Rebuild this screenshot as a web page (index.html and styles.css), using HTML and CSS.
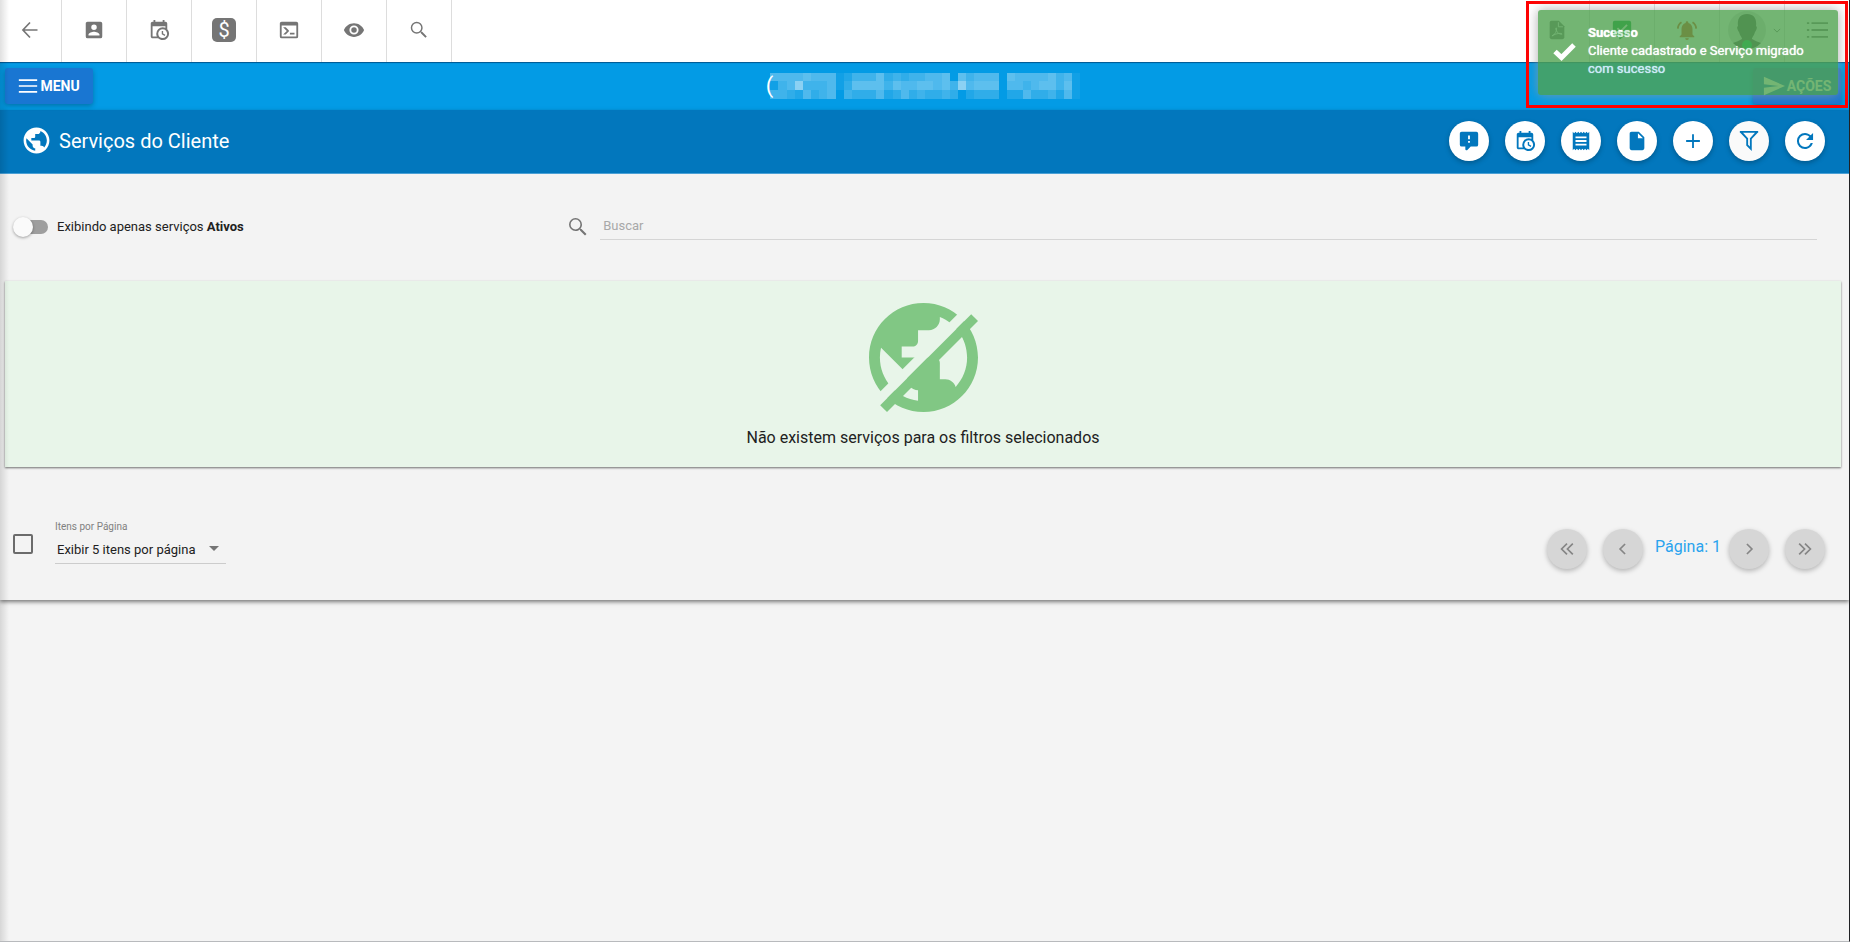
FILE: index.html
```html
<!DOCTYPE html>
<html lang="pt-BR">
<head>
<meta charset="utf-8">
<title>Serviços do Cliente</title>
<link rel="stylesheet" href="styles.css">
</head>
<body>
<svg class="defs" aria-hidden="true">
  <symbol id="calendar" viewBox="0 0 24 24"><path d="M15,13H16.5V15.82L18.94,17.23L18.19,18.53L15,16.69V13M19,8H5V19H9.67C9.24,18.09 9,17.07 9,16A7,7 0 0,1 16,9C17.07,9 18.09,9.24 19,9.67V8M5,21C3.89,21 3,20.1 3,19V5C3,3.89 3.89,3 5,3H6V1H8V3H16V1H18V3H19A2,2 0 0,1 21,5V11.1C22.24,12.36 23,14.09 23,16A7,7 0 0,1 16,23C14.09,23 12.36,22.24 11.1,21H5M16,11.15A4.85,4.85 0 0,0 11.15,16C11.15,18.68 13.32,20.85 16,20.85A4.85,4.85 0 0,0 20.85,16C20.85,13.32 18.68,11.15 16,11.15Z"/></symbol>
  <symbol id="magnify" viewBox="0 0 24 24"><path d="M9.5,3A6.5,6.5 0 0,1 16,9.5C16,11.11 15.41,12.59 14.44,13.73L14.71,14H15.5L20.5,19L19,20.5L14,15.5V14.71L13.73,14.44C12.59,15.41 11.11,16 9.5,16A6.5,6.5 0 0,1 3,9.5A6.5,6.5 0 0,1 9.5,3M9.5,4.6A4.9,4.9 0 0,0 4.6,9.5A4.9,4.9 0 0,0 9.5,14.4A4.9,4.9 0 0,0 14.4,9.5A4.9,4.9 0 0,0 9.5,4.6Z"/></symbol>
  <symbol id="globe" viewBox="0 0 24 24"><path d="M12 2C6.48 2 2 6.48 2 12s4.480 10 10 10 10-4.480 10-10S17.520 2 12 2zm-1 17.930c-3.950-.490-7-3.850-7-7.930 0-.620.080-1.210.210-1.790L9 15v1c0 1.100.900 2 2 2v1.930zm6.900-2.540c-.260-.810-1-1.390-1.900-1.390h-1v-3c0-.550-.450-1-1-1H8v-2h2c.550 0 1-.450 1-1V7h2c1.100 0 2-.900 2-2v-.410c2.930 1.190 5 4.060 5 7.410 0 2.080-.800 3.970-2.100 5.390z"/></symbol>
</svg>

<header class="topbar">
  <nav class="tools">
    <button class="tool back" aria-label="Voltar"><svg class="icon" viewBox="0 0 24 24"><path class="line" d="M21 12H4M12 3L3.500 12L12 21"/></svg></button>
    <button class="tool" aria-label="Clientes"><svg class="icon" viewBox="0 0 24 24"><path d="M6,17C6,15 10,13.900 12,13.900C14,13.900 18,15 18,17V18H6M15,9A3,3 0 0,1 12,12A3,3 0 0,1 9,9A3,3 0 0,1 12,6A3,3 0 0,1 15,9M3,5V19A2,2 0 0,0 5,21H19A2,2 0 0,0 21,19V5A2,2 0 0,0 19,3H5C3.890,3 3,3.900 3,5Z"/></svg></button>
    <button class="tool" aria-label="Agenda"><svg class="icon"><use href="#calendar"/></svg></button>
    <button class="tool" aria-label="Financeiro"><span class="money">$</span></button>
    <button class="tool" aria-label="Console"><svg class="icon" viewBox="0 0 24 24"><path d="M20,19V7H4V19H20M20,3A2,2 0 0,1 22,5V19A2,2 0 0,1 20,21H4A2,2 0 0,1 2,19V5C2,3.890 2.900,3 4,3H20M13,17V15H18V17H13M9.580,13L5.570,9H8.400L11.700,12.300C12.090,12.690 12.090,13.330 11.700,13.720L8.420,17H5.590L9.580,13Z"/></svg></button>
    <button class="tool" aria-label="Visualizar"><svg class="icon" viewBox="0 0 24 24"><path d="M12,9A3,3 0 0,0 9,12A3,3 0 0,0 12,15A3,3 0 0,0 15,12A3,3 0 0,0 12,9M12,17A5,5 0 0,1 7,12A5,5 0 0,1 12,7A5,5 0 0,1 17,12A5,5 0 0,1 12,17M12,4.500C7,4.500 2.730,7.610 1,12C2.730,16.390 7,19.500 12,19.500C17,19.500 21.270,16.390 23,12C21.270,7.610 17,4.500 12,4.500Z"/></svg></button>
    <button class="tool" aria-label="Pesquisar"><svg class="icon"><use href="#magnify"/></svg></button>
  </nav>
  <nav class="tools tools-right">
    <button class="tool" aria-label="PDF"><svg class="icon" viewBox="0 0 24 24"><path d="M6 2H14L20 8V20A2 2 0 0 1 18 22H6A2 2 0 0 1 4 20V4A2 2 0 0 1 6 2Z"/><path class="cut" d="M13.500 3.500V8.500H18.500M6.500 18.500C10 17 12 13 11.500 10C11 9 10.300 10 11 12C12 15 15 17 17.500 16.500C17 15 11 15.500 6.500 18.500"/></svg></button>
    <button class="tool green" aria-label="Tarefas"><svg class="icon" viewBox="0 0 24 24"><path d="M4 2H20A2 2 0 0 1 22 4V17A2 2 0 0 1 20 19H14L10 22H9V19H4A2 2 0 0 1 2 17V4A2 2 0 0 1 4 2Z"/><path class="cut check" d="M7 10L10.500 13.500L17.500 6.500"/></svg></button>
    <button class="tool orange" aria-label="Notificações"><svg class="icon" viewBox="0 0 24 24"><path d="M12 2.500A1.500 1.500 0 0 1 13.500 4V4.300C16.400 5 18 7.600 18 11V17L20 19V20H4V19L6 17V11C6 7.600 7.600 5 10.500 4.300V4A1.500 1.500 0 0 1 12 2.500M10 21H14A2 2 0 0 1 10 21"/><path class="line" d="M6 3.500C3.500 5 2.200 7.500 2 10.500M18 3.500C20.500 5 21.800 7.500 22 10.500"/></svg></button>
    <button class="tool user" aria-label="Usuário"><svg class="avatar" viewBox="0 0 40 40"><circle class="disc" cx="20" cy="20" r="19"/><path d="M20 4C27 4 30 9 29 16C31 17 29 21 28 22C27 26 25 27 25 29C28 31 32 32 34 33A19 19 0 0 1 6 33C8 32 12 31 15 29C15 27 13 26 12 22C11 21 9 17 11 16C10 9 13 4 20 4Z"/><circle class="dot" cx="20" cy="35" r="5"/></svg><svg class="caret" viewBox="0 0 10 6"><path class="line thin" d="M1 1L5 5L9 1"/></svg></button>
    <button class="tool" aria-label="Lista"><svg class="icon" viewBox="0 0 24 24"><path d="M6 3.500H24V5.500H6ZM6 11H24V13H6ZM6 18.500H24V20.500H6ZM1 3.500H3.500V5.500H1ZM1 11H3.500V13H1ZM1 18.500H3.500V20.500H1Z"/></svg></button>
  </nav>
</header>

<div class="clientbar">
  <button class="raised"><svg class="icon" viewBox="0 0 24 24"><path d="M1 4H23V6H1ZM1 11H23V13H1ZM1 18H23V20H1Z"/></svg>MENU</button>
  <div class="client"><span class="paren">(</span><div class="mosaic" id="mosaic"></div></div>
  <button class="raised actions"><svg class="icon" viewBox="0 0 24 24"><path d="M1,22L24,12L1,2V10L17,12L1,14V22Z"/></svg>AÇÕES</button>
</div>

<main class="panel">
  <div class="titlebar">
    <svg class="title-icon"><use href="#globe"/></svg>
    <h1>Serviços do Cliente</h1>
    <div class="fabs">
      <button class="fab" aria-label="Avisos"><svg class="icon" viewBox="0 0 24 24"><path d="M9,22A1,1 0 0,1 8,21V18H4A2,2 0 0,1 2,16V4C2,2.890 2.900,2 4,2H20A2,2 0 0,1 22,4V16A2,2 0 0,1 20,18H13.900L10.200,21.710C10,21.900 9.750,22 9.500,22H9M13,10V6H11V10H13M13,14V12H11V14H13Z"/></svg></button>
      <button class="fab" aria-label="Agendamentos"><svg class="icon"><use href="#calendar"/></svg></button>
      <button class="fab" aria-label="Recibos"><svg class="icon" viewBox="0 0 24 24"><path d="M18 17H6v-2h12v2zm0-4H6v-2h12v2zm0-4H6V7h12v2zM3 22l1.500-1.500L6 22l1.500-1.500L9 22l1.500-1.500L12 22l1.500-1.500L15 22l1.500-1.500L18 22l1.500-1.500L21 22V2l-1.500 1.500L18 2l-1.500 1.500L15 2l-1.500 1.500L12 2l-1.500 1.500L9 2 7.500 3.500 6 2 4.500 3.500 3 2v20z"/></svg></button>
      <button class="fab" aria-label="Documentos"><svg class="icon" viewBox="0 0 24 24"><path d="M13,9V3.500L18.500,9M6,2C4.890,2 4,2.890 4,4V20A2,2 0 0,0 6,22H18A2,2 0 0,0 20,20V8L14,2H6Z"/></svg></button>
      <button class="fab" aria-label="Adicionar"><svg class="icon" viewBox="0 0 24 24"><path class="line" d="M12 4.500V19.500M4.500 12H19.500"/></svg></button>
      <button class="fab soft" aria-label="Filtrar"><svg class="icon" viewBox="0 0 24 24"><path d="M2,1H22V3H21.500L15,9.920V23L9,17V9.910L2.500,3H2V1M11,16.080L13,18.080V9H13.090L18.500,3H5.500L10.920,9H11V16.080Z"/></svg></button>
      <button class="fab" aria-label="Atualizar"><svg class="icon" viewBox="0 0 24 24"><path d="M17.650,6.350C16.200,4.900 14.210,4 12,4A8,8 0 0,0 4,12A8,8 0 0,0 12,20C15.730,20 18.840,17.450 19.730,14H17.650C16.830,16.330 14.610,18 12,18A6,6 0 0,1 6,12A6,6 0 0,1 12,6C13.660,6 15.140,6.690 16.220,7.780L13,11H20V4L17.650,6.350Z" transform="translate(-1.200 -1.200) scale(1.100)"/></svg></button>
    </div>
  </div>

  <div class="filters">
    <label class="switch"><input type="checkbox"><span>Exibindo apenas serviços <b>Ativos</b></span></label>
    <div class="search">
      <label for="q" aria-label="Buscar"><svg class="search-icon"><use href="#magnify"/></svg></label>
      <input id="q" type="text" placeholder="Buscar">
    </div>
  </div>

  <section class="empty">
    <svg class="empty-icon" viewBox="2 2 20 20"><use href="#globe" width="24" height="24"/><path class="gap" d="M22.300 0L24.800 0L0 24.800L0 22.300Z"/><path d="M20.750 4.050L22 5.300L5.300 22L4.050 20.750Z"/></svg>
    <p>Não existem serviços para os filtros selecionados</p>
  </section>

  <footer class="footer">
    <input class="check-all" type="checkbox" aria-label="Selecionar todos">
    <div class="per-page">
      <label for="pp">Itens por Página</label>
      <div class="select"><select id="pp"><option>Exibir 5 itens por página</option></select><span class="arrow"></span></div>
    </div>
    <div class="pager">
      <button class="fab off" aria-label="Primeira"><svg class="icon" viewBox="0 0 24 24"><path class="line" d="M12 5.500L5.500 12L12 18.500M19 5.500L12.500 12L19 18.500"/></svg></button>
      <button class="fab off" aria-label="Anterior"><svg class="icon" viewBox="0 0 24 24"><path class="line" d="M14.500 6L8.500 12L14.500 18"/></svg></button>
      <span class="page">Página: 1</span>
      <button class="fab off" aria-label="Próxima"><svg class="icon" viewBox="0 0 24 24"><path class="line" d="M9.500 6L15.500 12L9.500 18"/></svg></button>
      <button class="fab off" aria-label="Última"><svg class="icon" viewBox="0 0 24 24"><path class="line" d="M5 5.500L11.500 12L5 18.500M12 5.500L18.500 12L12 18.500"/></svg></button>
    </div>
  </footer>
</main>

<div class="edge"></div>
<div class="highlight">
  <div class="toast" role="status">
    <svg class="toast-icon" viewBox="0 0 24 20"><path d="M2.500 10.500L9 16.500L21.500 4"/></svg>
    <div><strong>Sucesso</strong><p>Cliente cadastrado e Serviço migrado com sucesso</p></div>
  </div>
</div>
<script src="script.js"></script>
</body>
</html>
```
FILE: styles.css
```css
* { box-sizing: border-box; }
body {
  margin: 0;
  min-height: 100vh;
  background: #f4f4f4;
  border-right: 1px solid #202124;
  border-bottom: 1px solid #b8babd;
  font-family: Roboto, "Liberation Sans", sans-serif;
  font-size: 13px;
  color: #212121;
  position: relative;
}
button { font: inherit; border: 0; padding: 0; background: none; color: inherit; cursor: pointer; }
svg { fill: currentColor; display: block; }
.defs { position: absolute; width: 0; height: 0; }
.icon { width: 22px; height: 22px; }
.line { fill: none; stroke: currentColor; stroke-width: 2; }
.thin { stroke-width: 1; }
.cut { fill: none; stroke: #fff; stroke-width: 1; }
.check { stroke-width: 2; }

.topbar { display: flex; justify-content: space-between; height: 62px; background: #fff; color: #757575; }
.tools { display: flex; }
.tool { width: 65px; display: flex; align-items: center; justify-content: center; padding-bottom: 2px; border-right: 1px solid #ddd; }
.back { width: 62px; padding-right: 2px; }
.back .icon { width: 20px; height: 20px; }
.tools-right .tool:last-child { width: 64px; border-right: 0; }
.green { color: #00a030; }
.orange { color: #d84315; }
.money { width: 24px; height: 24px; border-radius: 5px; background: #757575; color: #fff; font-size: 20px; line-height: 24px; }
.user { gap: 6px; padding-left: 4px; color: #555; }
.avatar { width: 40px; height: 40px; }
.disc { fill: #ddd; }
.dot { fill: #00c853; }
.caret { width: 8px; height: 5px; }

.clientbar {
  display: flex; align-items: center; justify-content: space-between;
  height: 48px; padding: 0 8px 1px 5px;
  background: #039be5; color: #fff;
  box-shadow: inset 0 2px 1px -1px #01578f;
}
.raised {
  display: flex; align-items: center; justify-content: center;
  width: 88px; height: 36px; border-radius: 3px;
  background: #1976d2; box-shadow: 0 2px 5px rgba(0, 0, 0, .26);
  font-size: 14px; font-weight: 700;
}
.raised .icon { margin-right: 2px; }
.raised:first-child .icon { width: 20px; height: 20px; }
.client { display: flex; align-items: center; }
.paren { font-size: 22px; line-height: 26px; }
.mosaic { display: grid; width: 310px; height: 26px; margin-left: -3px; grid-template: repeat(3, 1fr) / repeat(38, 1fr); }
.mosaic span { background: #fff; }

.panel { background: #f3f3f3; box-shadow: 0 2px 4px rgba(0, 0, 0, .5); }
.titlebar { display: flex; align-items: center; height: 64px; padding: 0 24px 1px 21px; background: #0277bd; color: #fff; border-bottom: 1px solid #4aa0d5; }
.title-icon { width: 31px; height: 31px; margin-bottom: 2px; }
h1 { margin: 0 auto 0 7px; font-size: 20px; font-weight: 400; }
.fabs { display: flex; gap: 16px; }
.fab { width: 40px; height: 40px; border-radius: 50%; display: flex; align-items: center; justify-content: center; background: #fff; color: #0277bd; box-shadow: 0 2px 5px rgba(0, 0, 0, .26); }
.fab.soft { background: #fafafa; }

.filters { display: flex; align-items: center; height: 107px; padding: 0 32px 2px 13px; }
.switch { display: flex; align-items: center; gap: 9px; width: calc(30% + 12px); }
.switch input { appearance: none; margin: 0; width: 35px; height: 20px; position: relative; }
.switch input::before { content: ""; position: absolute; left: 2px; right: 0; top: 3px; height: 14px; border-radius: 7px; background: #9e9e9e; }
.switch input::after { content: ""; position: absolute; left: 0; top: 0; width: 20px; height: 20px; border-radius: 50%; background: #fafafa; box-shadow: 0 1px 3px rgba(0, 0, 0, .35); }
.search { flex: 1; display: flex; align-items: center; gap: 10px; color: #757575; }
.search-icon { width: 24px; height: 24px; }
.search input { flex: 1; height: 26px; padding: 0 3px 2px; border: 0; border-bottom: 1px solid #d5d5d5; background: none; font: inherit; outline: 0; }
.search input::placeholder { color: #a8a8a8; }

.empty { margin: 0 8px 0 5px; padding: 22px 0 19px; background: #e8f5e9; box-shadow: 0 1px 2px rgba(0, 0, 0, .55); display: flex; flex-direction: column; align-items: center; }
.empty-icon { width: 109px; height: 109px; color: #81c784; }
.gap { fill: #e8f5e9; }
.empty p { margin: 16px 0 0; font-size: 16px; line-height: 20px; }

.footer { display: flex; align-items: flex-start; padding: 54px 24px 30px 13px; height: 133px; }
.check-all { appearance: none; width: 20px; height: 20px; margin: 13px 22px 0 0; border: 2px solid #6b6b6b; border-radius: 2px; }
.per-page { width: 171px; }
.per-page label { display: block; font-size: 10px; line-height: 12px; color: #808080; }
.select { display: flex; align-items: center; height: 31px; border-bottom: 1px solid #ccc; }
.select select { flex: 1; appearance: none; border: 0; padding: 2px 2px 0; background: none; font: inherit; color: inherit; }
.arrow { margin-right: 7px; border: 5px solid transparent; border-top-color: #757575; border-bottom: 0; }
.pager { display: flex; align-items: center; margin: 8px 0 0 auto; }
.off { background: #d6d6d6; color: #858585; }
.off .icon { width: 20px; height: 20px; }
.off + .off { margin-left: 16px; }
.page { margin: 0 8px 6px 12px; font-size: 16px; color: #29a3ee; }

.edge { position: absolute; left: 0; top: 0; bottom: 0; width: 9px; background: linear-gradient(90deg, rgba(0, 0, 0, .12), rgba(0, 0, 0, 0)); }
.highlight { position: absolute; top: 1px; right: 1px; width: 322px; height: 107px; padding: 6px 7px 0 9px; border: 3px solid #f00; }
.toast {
  display: flex; align-items: center; gap: 11px;
  height: 85px; padding: 0 14px 3px;
  border-radius: 3px; background: #51a351; color: #fff; opacity: .8;
  box-shadow: 0 0 12px #999;
  font-size: 13px; line-height: 18px;
  text-shadow: 0 0 1px #fff;
}
.toast p { margin: 0; }
.toast strong { font-weight: 700; }
.toast-icon { flex: none; width: 25px; height: 20px; }
.toast-icon path { fill: none; stroke: currentColor; stroke-width: 5; }
```
FILE: script.js
```js
// Opacity steps of the masked client name, one digit per tile.
const rows = [
  "55556555124446343445560645550655556451",
  "14594445136666465566564956660554566461",
  "44325345043335235343343023330225334251"
];
const mosaic = document.getElementById("mosaic");
for (const step of rows.join("")) {
  const tile = document.createElement("span");
  tile.style.opacity = step * 0.06;
  mosaic.append(tile);
}
```
